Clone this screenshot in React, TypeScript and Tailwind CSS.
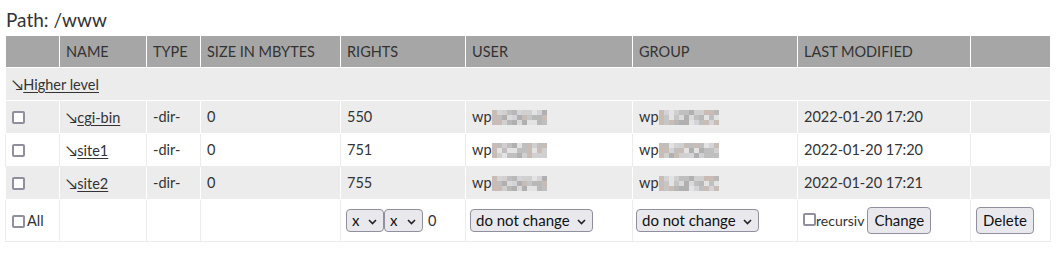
import React from 'react';

type Row = { name: string; rights: string; seed: number; modified: string };

const shades = ['#dadada', '#c6c6c6', '#b8b8b8', '#d0d0d0', '#e3e3e3', '#bfbfbf', '#b0b0b0', '#c9bcb5', '#d4d4d8', '#ededed'];

const rows: Row[] = [
  { name: 'cgi-bin', rights: '550', seed: 3, modified: '2022-01-20 17:20' },
  { name: 'site1', rights: '751', seed: 11, modified: '2022-01-20 17:20' },
  { name: 'site2', rights: '755', seed: 3, modified: '2022-01-20 17:21' },
];

// pseudo-random pixel block to stand in for the blurred names
const Mosaic = ({ seed, cols, light }: { seed: number; cols: number; light?: boolean }) => {
  const size = 5;
  let s = seed * 9301 + 49297;
  const cells: string[] = [];
  for (let i = 0; i < cols * 3; i++) {
    s = (s * 9301 + 49297) % 233280;
    let idx = Math.floor((s / 233280) * 9);
    if (i % cols === 0) idx = 7;
    if (light && idx < 3) idx += 3;
    cells.push(shades[idx]);
  }
  return (
    <svg width={cols * size} height={3 * size} className="inline-block align-[-3px]">
      {cells.map((c, i) => (
        <rect key={i} x={(i % cols) * size} y={Math.floor(i / cols) * size} width={size} height={size} fill={c} />
      ))}
    </svg>
  );
};

const Check = () => (
  <span className="inline-block w-[13px] h-[13px] border-2 border-[#8f8f9d] rounded-[2px] bg-white align-[-2px]" />
);

const Chevron = () => (
  <svg width="9" height="6" viewBox="0 0 9 6" className="absolute right-[6px] top-[9px]">
    <path d="M1 1l3.5 3.5L8 1" fill="none" stroke="#222" strokeWidth="1.6" />
  </svg>
);

const Select = ({ label, w }: { label: string; w: string }) => (
  <span className={`relative inline-block h-[23px] ${w} bg-[#e9e9ed] border border-[#8f8f9d] rounded-[4px] pl-[5px] leading-[21px] text-[15px] text-[#111] align-middle`}>
    {label}
    <Chevron />
  </span>
);

const Button = ({ label }: { label: string }) => (
  <span className="inline-block h-[27px] px-[6px] bg-[#e9e9ed] border border-[#8f8f9d] rounded-[4px] leading-[25px] text-[15px] text-[#111] align-middle">
    {label}
  </span>
);

const Arrow = ({ text }: { text: string }) => (
  <span className="text-[#333]">
    <span className="text-[15px]">↘</span><span className="underline underline-offset-2">{text}</span>
  </span>
);

const App: React.FC = () => {
  const td = 'px-[6px] border border-white';
  return (
    <div className="bg-white w-[1056px] h-[255px] font-['Lato','Open_Sans',sans-serif] text-[14.5px] text-[#333]">
      <div className="pl-[6px] pt-[9px] h-[35px] text-[19px] leading-[22px] text-[#333]">Path: /www</div>
      <table className="ml-[5px] w-[1046px] table-fixed border-collapse border border-[#cccccc]">
        <colgroup>
          <col className="w-[54px]" />
          <col className="w-[87px]" />
          <col className="w-[54px]" />
          <col className="w-[140px]" />
          <col className="w-[125px]" />
          <col className="w-[167px]" />
          <col className="w-[165px]" />
          <col className="w-[173px]" />
          <col className="w-[80px]" />
        </colgroup>
        <thead>
          <tr className="h-[32px] bg-[#a6a6a6] text-left">
            {['', 'NAME', 'TYPE', 'SIZE IN MBYTES', 'RIGHTS', 'USER', 'GROUP', 'LAST MODIFIED', ''].map((h, i) => (
              <th key={i} className={`${td} font-normal text-[#333]`}>{h}</th>
            ))}
          </tr>
        </thead>
        <tbody>
          <tr className="h-[33px] bg-[#ececec]">
            <td colSpan={9} className={td}><Arrow text="Higher level" /></td>
          </tr>
          {rows.map((r, i) => {
            const odd = i % 2 === 0;
            const c = odd ? 'px-[6px] border border-white' : 'px-[6px] border border-[#ececec]';
            return (
              <tr key={r.name} className={`h-[33px] ${odd ? 'bg-[#ececec]' : 'bg-white'}`}>
                <td className={c}><Check /></td>
                <td className={c}><Arrow text={r.name} /></td>
                <td className={c}>-dir-</td>
                <td className={c}>0</td>
                <td className={c}>{r.rights}</td>
                <td className={c}>wp<Mosaic seed={r.seed} cols={11} light={!odd} /></td>
                <td className={c}>wp<Mosaic seed={r.seed + 5} cols={12} light={!odd} /></td>
                <td className={c}>{r.modified}</td>
                <td className={c}></td>
              </tr>
            );
          })}
          <tr className="h-[42px] bg-white">
            <td className="px-[6px] border border-[#ececec]"><Check /><span className="ml-[2px]">All</span></td>
            <td className="border border-[#ececec]"></td>
            <td className="border border-[#ececec]"></td>
            <td className="border border-[#ececec]"></td>
            <td className="px-[5px] border border-[#ececec] whitespace-nowrap">
              <Select label="x" w="w-[38px]" />
              <Select label="x" w="w-[39px]" />
              <span className="ml-[5px] align-middle">0</span>
            </td>
            <td className="px-[4px] border border-[#ececec]"><Select label="do not change" w="w-[123px]" /></td>
            <td className="px-[3px] border border-[#ececec]"><Select label="do not change" w="w-[123px]" /></td>
            <td className="px-[5px] border border-[#ececec] whitespace-nowrap">
              <Check /><span className="text-[14px] mr-[3px] align-middle">recursiv</span><Button label="Change" />
            </td>
            <td className="px-[5px] border border-[#ececec]"><Button label="Delete" /></td>
          </tr>
        </tbody>
      </table>
    </div>
  );
};

export default App;
